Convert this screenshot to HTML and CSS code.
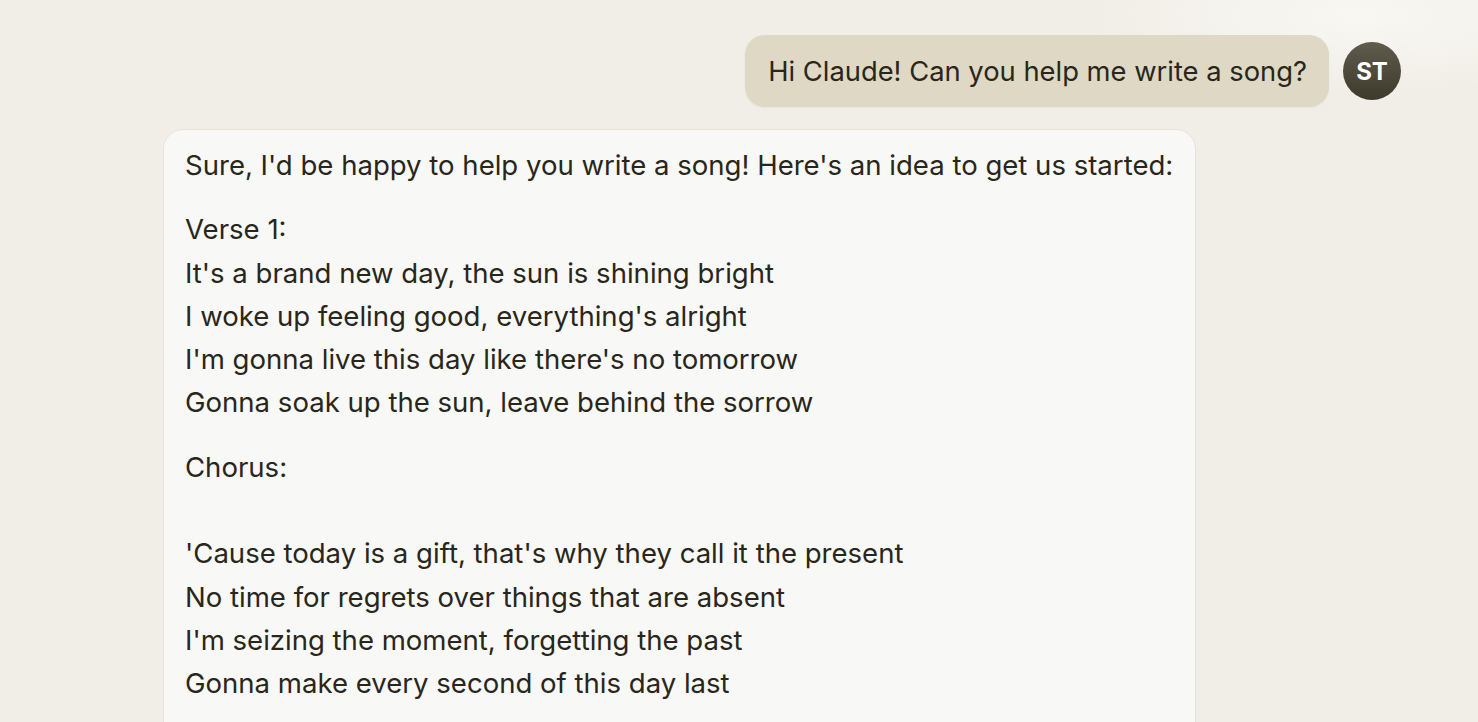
FILE: index.html
```html
<!DOCTYPE html>
<html>
<head>
<meta charset="utf-8">
<link rel="stylesheet" href="styles.css">
</head>
<body>
<div class="page">
  <div class="user-row">
    <div class="user-bubble">Hi Claude! Can you help me write a song?</div>
    <div class="avatar">ST</div>
  </div>
  <div class="reply-row">
    <div class="reply-card">
      <p>Sure, I'd be happy to help you write a song! Here's an idea to get us started:</p>
      <p>Verse 1:<br>It's a brand new day, the sun is shining bright<br>I woke up feeling good, everything's alright<br>I'm gonna live this day like there's no tomorrow<br>Gonna soak up the sun, leave behind the sorrow</p>
      <p>Chorus:<br><br>'Cause today is a gift, that's why they call it the present<br>No time for regrets over things that are absent<br>I'm seizing the moment, forgetting the past<br>Gonna make every second of this day last</p>
    </div>
  </div>
</div>
</body>
</html>
```
FILE: styles.css
```css
html, body {
  margin: 0;
  height: 100%;
  overflow: hidden;
}
body {
  background: radial-gradient(ellipse 280px 80px at 1360px 15px, rgba(250,249,245,0.85), rgba(250,249,245,0) 100%), #f0eee6;
  font-family: Inter, "Noto Sans", sans-serif;
  color: #29261b;
}
.page {
  height: 100%;
  box-sizing: border-box;
  overflow: hidden;
  padding: 35px 77px 0 163px;
}
.user-row {
  display: flex;
  justify-content: flex-end;
  align-items: center;
  gap: 14px;
}
.user-bubble {
  background: #ded8c4;
  border-radius: 20px;
  padding: 0 22px 0 23px;
  height: 72px;
  display: flex;
  align-items: center;
  font-size: 27.35px;
  box-shadow: 0 1px 3px rgba(0,0,0,0.04);
}
.avatar {
  width: 58px;
  height: 58px;
  border-radius: 50%;
  background: linear-gradient(180deg, #5f5b4d 0%, #3d3a2c 100%);
  color: #fff;
  font-weight: 700;
  font-size: 24px;
  display: flex;
  align-items: center;
  justify-content: center;
}
.reply-row {
  margin-top: 22px;
  display: flex;
}
.reply-card {
  background: #f8f8f6;
  border: 1px solid #e6e3da;
  border-radius: 20px;
  padding: 14px 22px 40px 21px;
  font-size: 27.55px;
  line-height: 43.3px;
}
.reply-card p {
  margin: 0 0 21px 0;
}
```
